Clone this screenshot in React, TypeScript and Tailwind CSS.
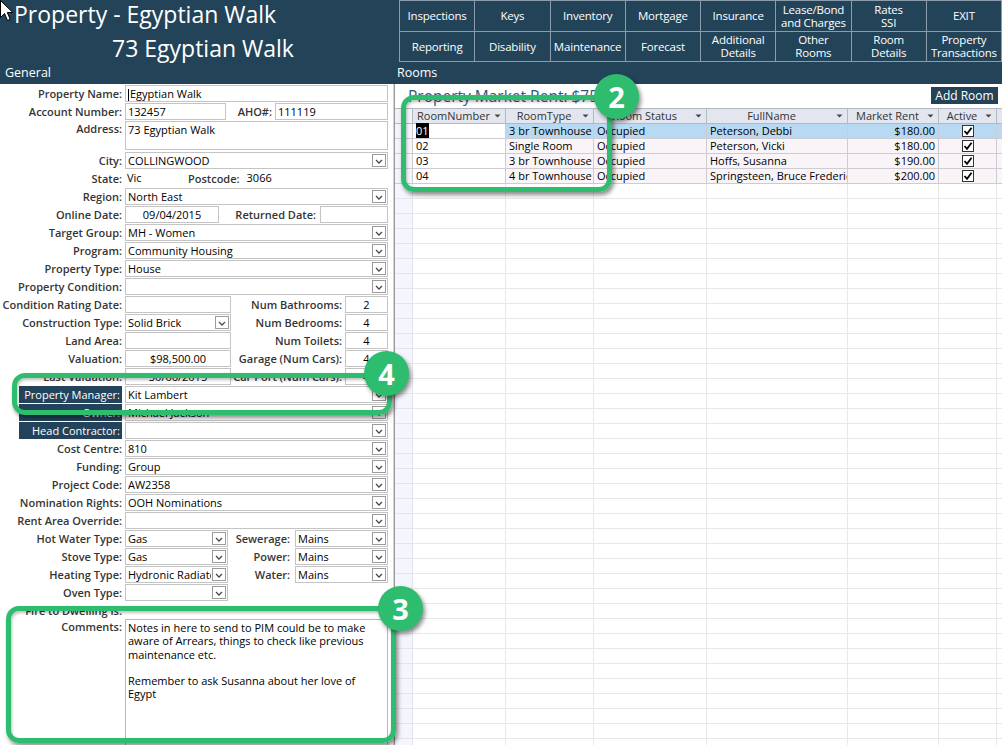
import React from 'react';

type FieldProps = {
  className?: string;
  children?: React.ReactNode;
  combo?: boolean;
  center?: boolean;
};

function DropBtn() {
  return (
    <span className="absolute right-[1px] top-[1px] w-[14px] h-[13px] border border-[#9b9b9b] bg-white flex items-end justify-center pb-[2px]">
      <svg width="8" height="5" viewBox="0 0 8 5">
        <path d="M1 1 L4 4 L7 1" fill="none" stroke="#4a4a4a" strokeWidth="1.3" />
      </svg>
    </span>
  );
}

function Field({ className = '', children, combo, center }: FieldProps) {
  return (
    <div
      className={`relative h-[17px] border border-[#c4c4c4] bg-white text-[11px] text-black leading-[15px] px-[2px] whitespace-nowrap overflow-hidden ${
        center ? 'text-center' : ''
      } ${className}`}
    >
      {combo ? <div className="mr-[14px] overflow-hidden">{children}</div> : children}
      {combo && <DropBtn />}
    </div>
  );
}

function Label({ children, dark }: { children: React.ReactNode; dark?: boolean }) {
  return (
    <div className="w-[122px] shrink-0 flex justify-end">
      {dark ? (
        <span className="w-[103px] h-[17px] bg-[#23435a] text-white text-right pr-[2px] text-[11px] leading-[17px] whitespace-nowrap">
          {children}
        </span>
      ) : (
        <span className="font-semibold text-[#353535] text-[11px] whitespace-nowrap leading-[15px]">{children}</span>
      )}
    </div>
  );
}

function SubLabel({ children, className = '' }: { children: React.ReactNode; className?: string }) {
  return (
    <span className={`shrink-0 text-right font-semibold text-[#353535] text-[11px] whitespace-nowrap leading-[15px] ${className}`}>
      {children}
    </span>
  );
}

function Row({ label, dark, children }: { label: React.ReactNode; dark?: boolean; children?: React.ReactNode }) {
  return (
    <div className="flex items-center h-[18px]">
      <Label dark={dark}>{label}</Label>
      <div className="ml-[3px] flex items-center">{children}</div>
    </div>
  );
}

function Cursor() {
  return (
    <svg className="absolute left-0 top-0" width="14" height="22" viewBox="0 0 14 22">
      <path d="M0.5 0.5 L0.5 17.5 L4.5 13.5 L7.5 20.5 L10.2 19.3 L7.3 12.5 L12.8 12.5 Z" fill="white" stroke="black" strokeWidth="1" />
    </svg>
  );
}

const buttons = [
  ['Inspections'],
  ['Keys'],
  ['Inventory'],
  ['Mortgage'],
  ['Insurance'],
  ['Lease/Bond', 'and Charges'],
  ['Rates', 'SSI'],
  ['EXIT'],
  ['Reporting'],
  ['Disability'],
  ['Maintenance'],
  ['Forecast'],
  ['Additional', 'Details'],
  ['Other', 'Rooms'],
  ['Room', 'Details'],
  ['Property', 'Transactions'],
];

const rooms = [
  ['01', '3 br Townhouse', 'Occupied', 'Peterson, Debbi', '$180.00'],
  ['02', 'Single Room', 'Occupied', 'Peterson, Vicki', '$180.00'],
  ['03', '3 br Townhouse', 'Occupied', 'Hoffs, Susanna', '$190.00'],
  ['04', '4 br Townhouse', 'Occupied', 'Springsteen, Bruce Frederick', '$200.00'],
];

const gridCols = 'grid grid-cols-[18px_93px_88px_113px_141px_91px_58px_1fr]';

function HeadCell({ children }: { children?: React.ReactNode }) {
  return (
    <div className="h-[15px] bg-[#e3e6ee] border-r border-b border-[#b4b8c3] flex items-center text-[11px] text-[#333] leading-[14px] pr-[4px]">
      <span className="flex-1 text-center whitespace-nowrap overflow-hidden">{children}</span>
      {children !== undefined && (
        <svg width="7" height="4" viewBox="0 0 7 4" className="shrink-0">
          <path d="M0.5 0.5 L6.5 0.5 L3.5 3.5 Z" fill="#444" />
        </svg>
      )}
    </div>
  );
}

function Check() {
  return (
    <span className="w-[12px] h-[12px] border border-[#333] bg-white flex items-center justify-center">
      <svg width="10" height="10" viewBox="0 0 10 10">
        <path d="M1.5 5 L4 7.8 L8.6 1.8" fill="none" stroke="#000" strokeWidth="1.8" />
      </svg>
    </span>
  );
}

function Callout({ n, rect, circle }: { n: string; rect: string; circle: string }) {
  return (
    <>
      <div
        className={`absolute border-[5px] border-[#2ebd6e] rounded-[13px] shadow-[2px_3px_4px_rgba(0,0,0,0.45),inset_1px_2px_3px_rgba(0,0,0,0.25)] ${rect}`}
      />
      <div
        className={`absolute w-[45px] h-[45px] rounded-full bg-[#2ebd6e] text-white font-bold text-[29px] leading-none flex items-center justify-center shadow-[2px_3px_4px_rgba(0,0,0,0.45)] ${circle}`}
      >
        {n}
      </div>
    </>
  );
}

export default function App() {
  const emptyRows = Array.from({ length: 38 });
  return (
    <div className="relative w-[1002px] h-[745px] overflow-hidden bg-[#234359] font-['Open_Sans',sans-serif]">
      {/* Header */}
      <div className="flex h-[62px]">
        <div className="w-[399px] shrink-0 text-white">
          <div className="pl-[14px] text-[23px] leading-[28px] whitespace-nowrap">Property - Egyptian Walk</div>
          <div className="pl-[112px] pt-[6px] text-[23px] leading-[28px] whitespace-nowrap">73 Egyptian Walk</div>
        </div>
        <div className="h-[62px] flex-1 grid grid-cols-8 grid-rows-2 gap-px bg-[#8c9cad] p-px">
          {buttons.map((b, i) => (
            <div
              key={i}
              className="bg-[#234359] text-white text-[11.5px] leading-[13px] flex flex-col items-center justify-center text-center whitespace-nowrap tracking-[-0.2px]"
            >
              {b.map((t, j) => (
                <span key={j}>{t}</span>
              ))}
            </div>
          ))}
        </div>
      </div>
      {/* Band */}
      <div className="flex h-[22px] items-center text-white text-[12.5px]">
        <div className="w-[394px] pl-[5px]">General</div>
        <div className="pl-[3px]">Rooms</div>
      </div>
      {/* Body */}
      <div className="flex h-[661px]">
        {/* Left form */}
        <div className="w-[394px] shrink-0 bg-white overflow-hidden border-r border-[#d4d4d4]">
          <Row label="Property Name:">
            <Field className="w-[263px]">
              <span className="inline-block w-px h-[12px] bg-black align-middle mr-[1px]" />
              Egyptian Walk
            </Field>
          </Row>
          <Row label="Account Number:">
            <Field className="w-[101px]">132457</Field>
            <SubLabel className="w-[46px]">AHO#:</SubLabel>
            <Field className="ml-[3px] w-[113px]">111119</Field>
          </Row>
          <div className="flex items-start h-[31px] pt-[1px]">
            <Label>Address:</Label>
            <Field className="ml-[3px] w-[263px] h-[29px]">73 Egyptian Walk</Field>
          </div>
          <Row label="City:">
            <Field combo className="w-[263px]">COLLINGWOOD</Field>
          </Row>
          <Row label="State:">
            <span className="w-[63px] pl-[2px] text-[11px] text-black">Vic</span>
            <SubLabel>Postcode:</SubLabel>
            <span className="ml-[7px] text-[11px] text-black">3066</span>
          </Row>
          <Row label="Region:">
            <Field combo className="w-[263px]">North East</Field>
          </Row>
          <Row label="Online Date:">
            <Field center className="w-[94px]">09/04/2015</Field>
            <SubLabel className="w-[97px]">Returned Date:</SubLabel>
            <Field className="ml-[4px] w-[68px]" />
          </Row>
          <Row label="Target Group:">
            <Field combo className="w-[263px]">MH - Women</Field>
          </Row>
          <Row label="Program:">
            <Field combo className="w-[263px]">Community Housing</Field>
          </Row>
          <Row label="Property Type:">
            <Field combo className="w-[263px]">House</Field>
          </Row>
          <Row label="Property Condition:">
            <Field combo className="w-[263px]" />
          </Row>
          <Row label="Condition Rating Date:">
            <Field className="w-[106px]" />
            <SubLabel className="w-[111px]">Num Bathrooms:</SubLabel>
            <Field center className="ml-[3px] w-[43px]">2</Field>
          </Row>
          <Row label="Construction Type:">
            <Field combo className="w-[106px]">Solid Brick</Field>
            <SubLabel className="w-[111px]">Num Bedrooms:</SubLabel>
            <Field center className="ml-[3px] w-[43px]">4</Field>
          </Row>
          <Row label="Land Area:">
            <Field className="w-[106px]" />
            <SubLabel className="w-[111px]">Num Toilets:</SubLabel>
            <Field center className="ml-[3px] w-[43px]">4</Field>
          </Row>
          <Row label="Valuation:">
            <Field center className="w-[106px]">$98,500.00</Field>
            <SubLabel className="w-[111px]">Garage (Num Cars):</SubLabel>
            <Field center className="ml-[3px] w-[43px]">4</Field>
          </Row>
          <Row label="Last Valuation:">
            <Field center className="w-[106px]">30/06/2015</Field>
            <SubLabel className="w-[111px]">Car Port (Num Cars):</SubLabel>
            <Field center className="ml-[3px] w-[43px]">4</Field>
          </Row>
          <Row label="Property Manager:" dark>
            <Field combo className="w-[263px]">Kit Lambert</Field>
          </Row>
          <Row label="Owner:" dark>
            <Field combo className="w-[263px]">Michael Jackson</Field>
          </Row>
          <Row label="Head Contractor:" dark>
            <Field combo className="w-[263px]" />
          </Row>
          <Row label="Cost Centre:">
            <Field combo className="w-[263px]">810</Field>
          </Row>
          <Row label="Funding:">
            <Field combo className="w-[263px]">Group</Field>
          </Row>
          <Row label="Project Code:">
            <Field combo className="w-[263px]">AW2358</Field>
          </Row>
          <Row label="Nomination Rights:">
            <Field combo className="w-[263px]">OOH Nominations</Field>
          </Row>
          <Row label="Rent Area Override:">
            <Field combo className="w-[263px]" />
          </Row>
          <Row label="Hot Water Type:">
            <Field combo className="w-[103px]">Gas</Field>
            <SubLabel className="w-[62px]">Sewerage:</SubLabel>
            <Field combo className="ml-[5px] w-[93px]">Mains</Field>
          </Row>
          <Row label="Stove Type:">
            <Field combo className="w-[103px]">Gas</Field>
            <SubLabel className="w-[62px]">Power:</SubLabel>
            <Field combo className="ml-[5px] w-[93px]">Mains</Field>
          </Row>
          <Row label="Heating Type:">
            <Field combo className="w-[103px]">Hydronic Radiator</Field>
            <SubLabel className="w-[62px]">Water:</SubLabel>
            <Field combo className="ml-[5px] w-[93px]">Mains</Field>
          </Row>
          <Row label="Oven Type:">
            <Field combo className="w-[103px]" />
          </Row>
          <Row label="Fire to Dwelling is:" />
          <div className="flex items-start">
            <Label>Comments:</Label>
            <div className="ml-[3px] w-[263px] h-[130px] border border-[#b8b8b8] bg-white px-[2px] pt-[1px] text-[11px] leading-[13.3px] text-black">
              <div>Notes in here to send to PIM could be to make</div>
              <div>aware of Arrears, things to check like previous</div>
              <div>maintenance etc.</div>
              <div>&nbsp;</div>
              <div>Remember to ask Susanna about her love of</div>
              <div>Egypt</div>
            </div>
          </div>
        </div>
        {/* Right panel */}
        <div className="flex-1 bg-white border-l border-[#9a9a9a] overflow-hidden">
          <div className="h-[24px] flex items-start">
            <div className="pl-[13px] text-[15.5px] leading-[24px] text-[#2e5a76] whitespace-nowrap">
              Property Market Rent: $750.00
            </div>
            <div className="ml-auto mr-[4px] mt-[3px] w-[67px] h-[17px] bg-[#23435a] text-white text-[12px] leading-[17px] text-center">
              Add Room
            </div>
          </div>
          <div className={`${gridCols} border-t border-[#b4b8c3]`}>
            <div className="h-[15px] bg-[#f1f1f8] border-r border-b border-[#b4b8c3]" />
            <HeadCell>RoomNumber</HeadCell>
            <HeadCell>RoomType</HeadCell>
            <HeadCell>Room Status</HeadCell>
            <HeadCell>FullName</HeadCell>
            <HeadCell>Market Rent</HeadCell>
            <HeadCell>Active</HeadCell>
            <div className="h-[15px] bg-[#e3e6ee] border-b border-[#b4b8c3]" />
          </div>
          {rooms.map((r, i) => {
            const sel = i === 0;
            const bg = sel ? 'bg-[#b7d9f4]' : 'bg-[#f8f4f7]';
            const cell = `h-[15px] border-r border-b border-[#cfcbd3] text-[11px] leading-[14px] text-black whitespace-nowrap overflow-hidden px-[3px] ${bg}`;
            return (
              <div key={i} className={gridCols}>
                <div className="h-[15px] bg-[#f4f4fb] border-r border-b border-[#cfcbd3]" />
                <div className="h-[15px] border-r border-b border-[#cfcbd3] text-[11px] leading-[14px] px-[3px] bg-white">
                  {sel ? <span className="bg-black text-white">{r[0]}</span> : r[0]}
                </div>
                <div className={cell}>{r[1]}</div>
                <div className={cell}>{r[2]}</div>
                <div className={cell}>{r[3]}</div>
                <div className={`${cell} text-right`}>{r[4]}</div>
                <div className={`${cell} flex items-center justify-center`}>
                  <Check />
                </div>
                <div className={`h-[15px] border-b border-[#cfcbd3] ${bg}`} />
              </div>
            );
          })}
          {emptyRows.map((_, i) => (
            <div key={i} className={gridCols}>
              <div className="h-[15px] bg-[#f5f5fd] border-r border-b border-[#e4e4ee]" />
              <div className="h-[15px] border-r border-b border-[#e8e8e8]" />
              <div className="h-[15px] border-r border-b border-[#e8e8e8]" />
              <div className="h-[15px] border-r border-b border-[#e8e8e8]" />
              <div className="h-[15px] border-r border-b border-[#e8e8e8]" />
              <div className="h-[15px] border-r border-b border-[#e8e8e8]" />
              <div className="h-[15px] border-r border-b border-[#e8e8e8]" />
              <div className="h-[15px] border-b border-[#e8e8e8]" />
            </div>
          ))}
        </div>
      </div>

      {/* Callouts */}
      <Callout n="2" rect="left-[401px] top-[95px] w-[211px] h-[97px]" circle="left-[594px] top-[74px]" />
      <Callout n="4" rect="left-[12px] top-[373px] w-[380px] h-[42px]" circle="left-[364px] top-[351px]" />
      <Callout n="3" rect="left-[6px] top-[606px] w-[390px] h-[137px]" circle="left-[378px] top-[586px]" />

      <Cursor />
    </div>
  );
}
